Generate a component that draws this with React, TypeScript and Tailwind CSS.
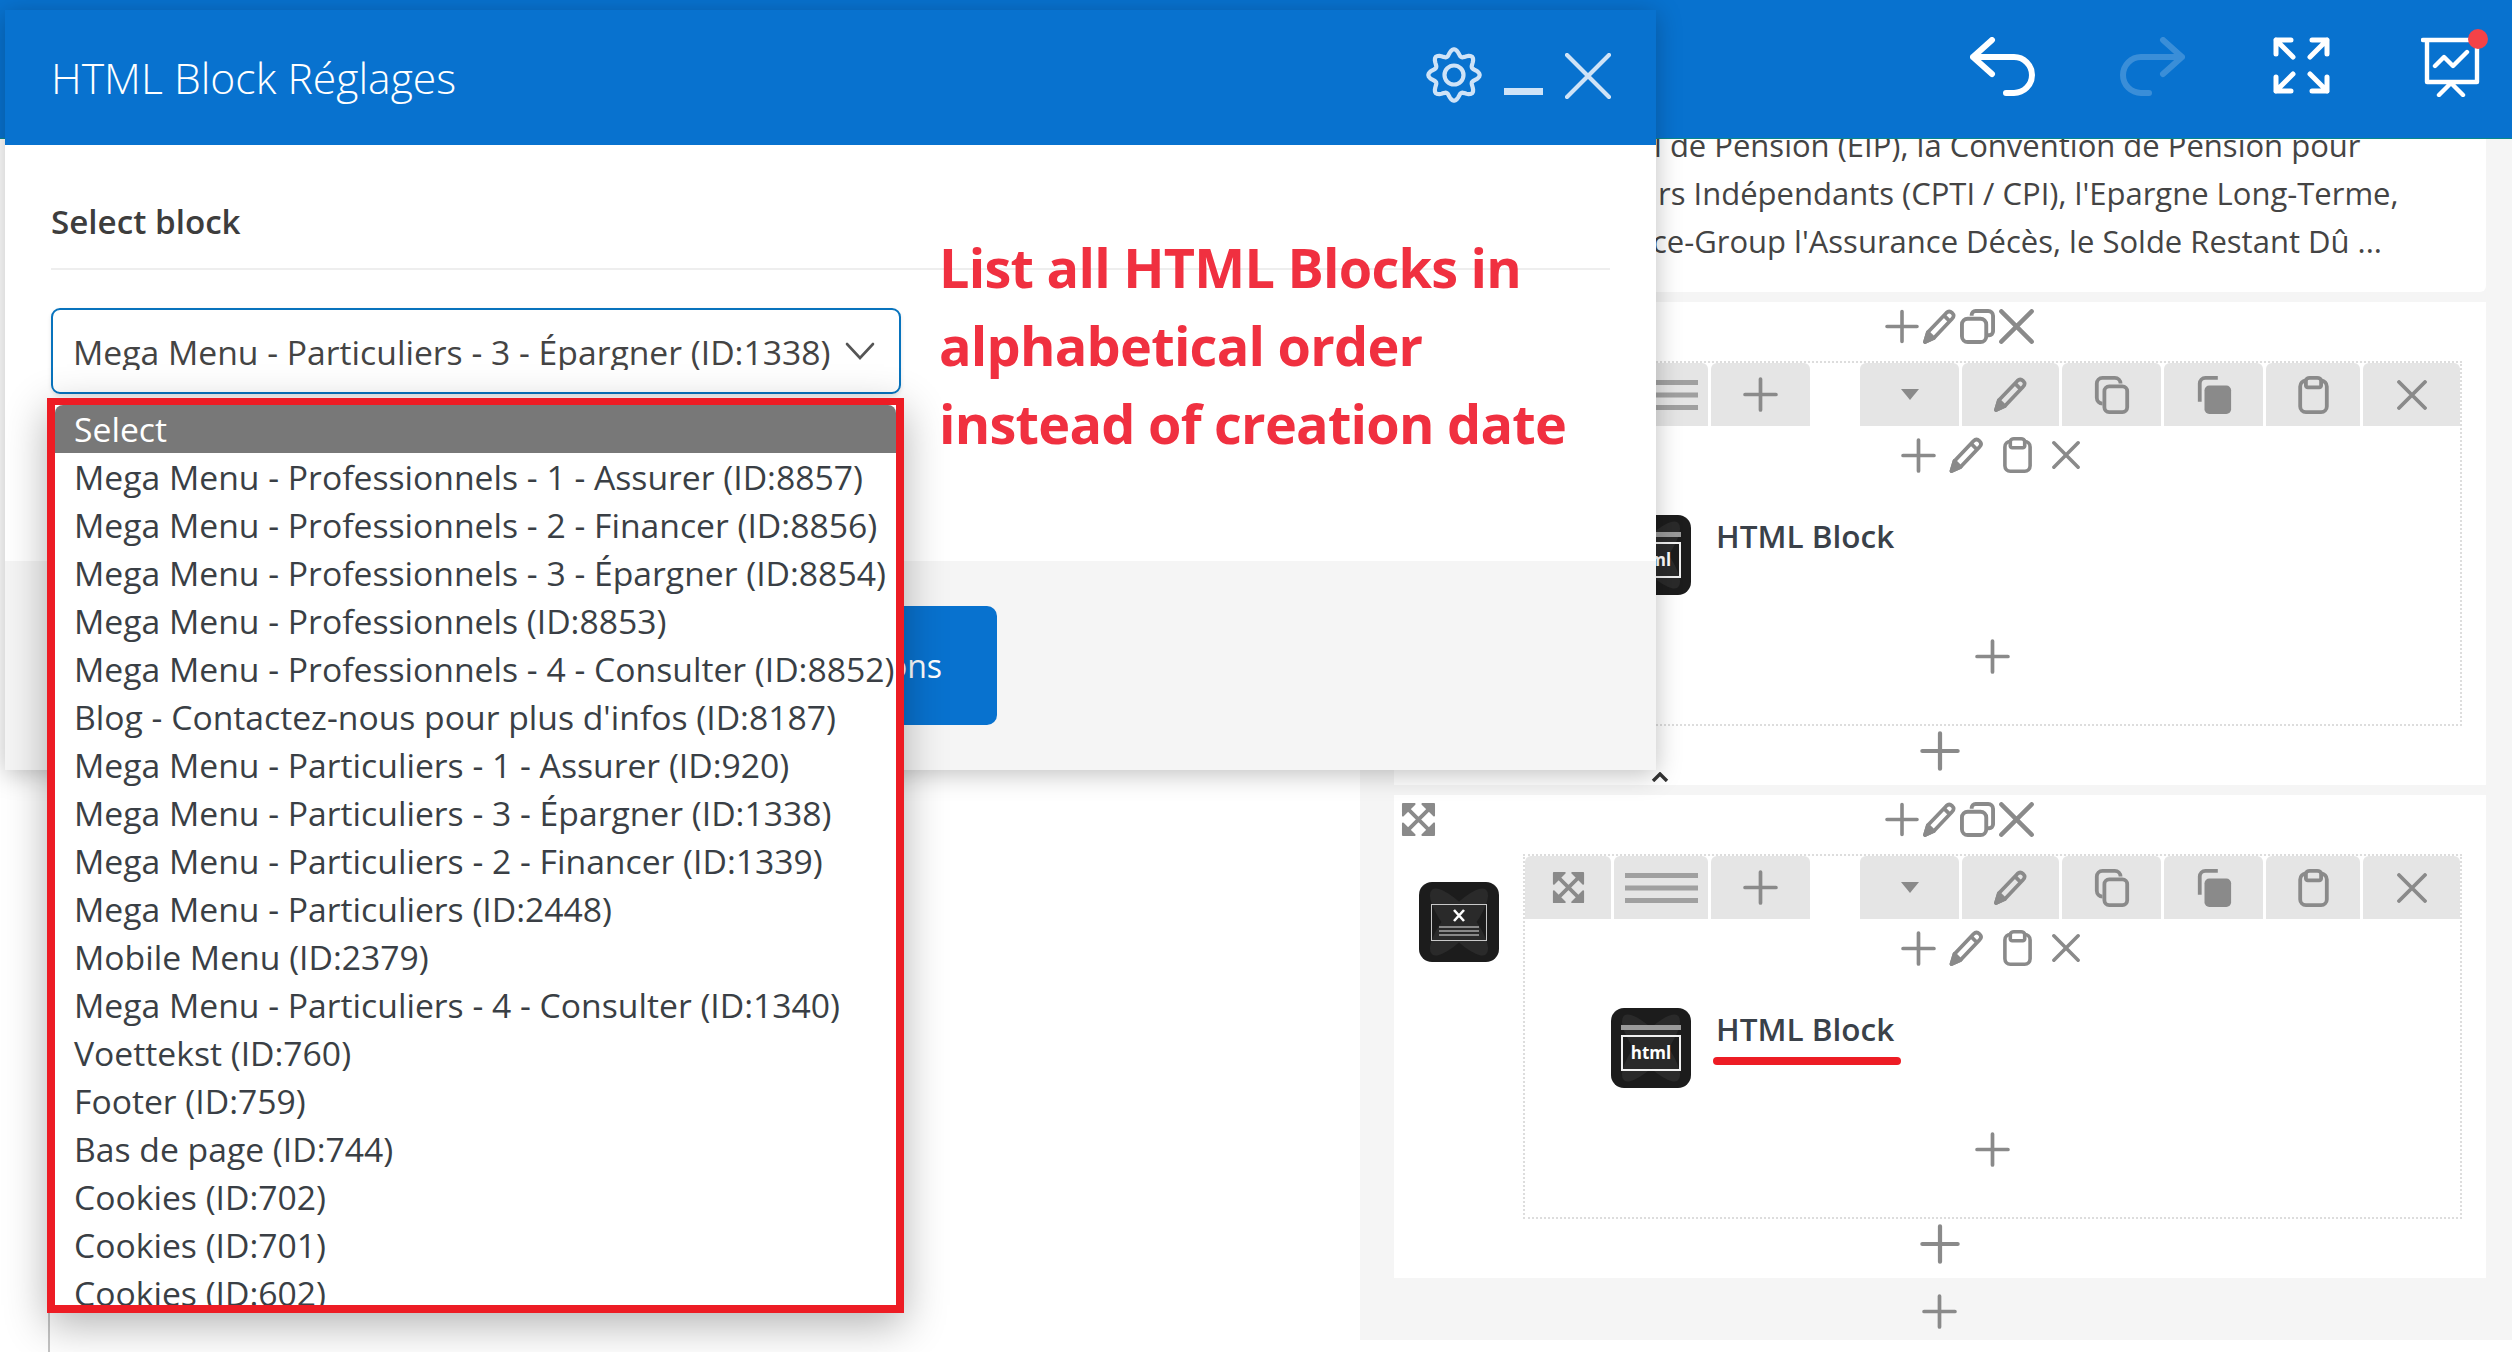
import React from 'react';

type IconProps = { className?: string };

const blocks = [
  'Mega Menu - Professionnels - 1 - Assurer (ID:8857)',
  'Mega Menu - Professionnels - 2 - Financer (ID:8856)',
  'Mega Menu - Professionnels - 3 - Épargner (ID:8854)',
  'Mega Menu - Professionnels (ID:8853)',
  'Mega Menu - Professionnels - 4 - Consulter (ID:8852)',
  "Blog - Contactez-nous pour plus d'infos (ID:8187)",
  'Mega Menu - Particuliers - 1 - Assurer (ID:920)',
  'Mega Menu - Particuliers - 3 - Épargner (ID:1338)',
  'Mega Menu - Particuliers - 2 - Financer (ID:1339)',
  'Mega Menu - Particuliers (ID:2448)',
  'Mobile Menu (ID:2379)',
  'Mega Menu - Particuliers - 4 - Consulter (ID:1340)',
  'Voettekst (ID:760)',
  'Footer (ID:759)',
  'Bas de page (ID:744)',
  'Cookies (ID:702)',
  'Cookies (ID:701)',
  'Cookies (ID:602)',
];

// scalloped outline of the settings cog, 8 lobes
const gearPath = (() => {
  const pts: string[] = [];
  for (let i = 0; i <= 96; i++) {
    const a = (i / 96) * Math.PI * 2 - Math.PI / 2;
    const r = 22.5 + 3.2 * Math.cos(8 * (a + Math.PI / 2));
    pts.push(`${(28 + r * Math.cos(a)).toFixed(2)} ${(28 + r * Math.sin(a)).toFixed(2)}`);
  }
  return `M${pts.join('L')}Z`;
})();

function Plus({ className }: IconProps) {
  return (
    <svg viewBox="0 0 34 34" className={className} fill="none" stroke="#8a8a8a" strokeWidth="3.6" strokeLinecap="round">
      <path d="M17 2v30M2 17h30" />
    </svg>
  );
}

function Pencil({ className }: IconProps) {
  return (
    <svg viewBox="0 0 34 36" className={className} fill="none" stroke="#8a8a8a" strokeWidth="3.8" strokeLinejoin="round">
      <path d="M2 34l3-10L24 4c2-2 4-2 6 0s2 4 0 6L11 30z" />
      <path d="M2 34l3-10 6 6z" fill="#8a8a8a" />
      <path d="M22 7l6 6" />
    </svg>
  );
}

function Duplicate({ className }: IconProps) {
  return (
    <svg viewBox="0 0 36 36" className={className} fill="none" stroke="#8a8a8a" strokeWidth="4">
      <path d="M12 7V6a4 4 0 0 1 4-4h13a5 5 0 0 1 5 5v16a4 4 0 0 1-4 4h-3" />
      <rect x="2" y="10" width="25" height="24" rx="6" />
    </svg>
  );
}

function CopyOutline({ className }: IconProps) {
  return (
    <svg viewBox="0 0 36 40" className={className} fill="none" stroke="#8a8a8a" strokeWidth="4">
      <path d="M8 29a6 6 0 0 1-6-6V8a6 6 0 0 1 6-6h13a6 6 0 0 1 6 6" />
      <rect x="10" y="11" width="24" height="27" rx="5" />
    </svg>
  );
}

function CopyFilled({ className }: IconProps) {
  return (
    <svg viewBox="0 0 36 40" className={className} fill="none" stroke="#8a8a8a" strokeWidth="4">
      <path d="M3 27V8a6 6 0 0 1 6-6h13" />
      <rect x="8" y="10" width="28" height="30" rx="5" fill="#8a8a8a" stroke="none" />
    </svg>
  );
}

function Clipboard({ className, notch = '#fff' }: IconProps & { notch?: string }) {
  return (
    <svg viewBox="0 0 32 40" className={className} fill="none" stroke="#8a8a8a" strokeWidth="4">
      <rect x="2" y="5" width="28" height="33" rx="6" />
      <path d="M8 5c0-2 2-3 4-3h8c2 0 4 1 4 3v5c0 1-1 2-2 2H10c-1 0-2-1-2-2z" fill={notch} />
    </svg>
  );
}

function Cross({ className }: IconProps) {
  return (
    <svg viewBox="0 0 30 30" className={className} fill="none" stroke="#8a8a8a" strokeWidth="3.8" strokeLinecap="round">
      <path d="M2 2l26 26M28 2L2 28" />
    </svg>
  );
}

function Move({ className }: IconProps) {
  return (
    <svg viewBox="0 0 36 36" className={className} fill="none" stroke="#8a8a8a" strokeWidth="4" strokeLinejoin="round">
      <path d="M5 5l26 26M31 5L5 31" />
      <path d="M2 2h12l-12 12zM34 2v12L22 2zM2 34V22l12 12zM34 34H22l12-12z" fill="#8a8a8a" strokeWidth="2" />
    </svg>
  );
}

function Lines({ className }: IconProps) {
  return (
    <svg viewBox="0 0 73 30" className={className} fill="#a0a0a0">
      <rect x="0" y="0" width="73" height="5" />
      <rect x="0" y="12.5" width="73" height="5" />
      <rect x="0" y="25" width="73" height="5" />
    </svg>
  );
}

function Caret({ className }: IconProps) {
  return (
    <svg viewBox="0 0 18 11" className={className} fill="#8a8a8a">
      <path d="M0 0h18L9 11z" />
    </svg>
  );
}

function WidgetIcon({ kind, className }: { kind: 'section' | 'html'; className?: string }) {
  return (
    <svg viewBox="0 0 80 80" className={className}>
      <rect width="80" height="80" rx="13" fill="#1c1c1c" />
      <ellipse cx="40" cy="40" rx="14" ry="42" transform="rotate(40 40 40)" fill="#2a2a2a" />
      <ellipse cx="40" cy="40" rx="14" ry="42" transform="rotate(-40 40 40)" fill="#2a2a2a" />
      {kind === 'section' ? (
        <g>
          <rect x="12.5" y="22.5" width="55" height="36" fill="none" stroke="#c8c8c8" strokeWidth="1" />
          <path d="M35 28l10 11M45 28L35 39" stroke="#fff" strokeWidth="2.6" />
          <path d="M20 45h40M20 49h40M20 53h40" stroke="#a8a8a8" strokeWidth="1.4" />
        </g>
      ) : (
        <g>
          <rect x="10" y="17" width="60" height="5" fill="#9a9a9a" />
          <rect x="11" y="28" width="58" height="34" fill="none" stroke="#f0f0f0" strokeWidth="2" />
          <text x="40" y="51" textAnchor="middle" fontSize="17" fontWeight="700" fill="#fff" fontFamily="'Open Sans', sans-serif">
            html
          </text>
        </g>
      )}
    </svg>
  );
}

function ToolButton({ width, children }: { width: string; children: React.ReactNode }) {
  return <div className={`${width} h-full bg-[#e5e5e5] rounded-t-[6px] flex items-center justify-center`}>{children}</div>;
}

function BlockCard({ underlined, children }: { underlined?: boolean; children?: React.ReactNode }) {
  return (
    <div className="relative bg-white h-[483px] flex flex-col">
      <div className="h-[59px] flex items-start pt-[7px] pl-[7px]">
        <Move className="w-[35px] h-[35px]" />
        <Plus className="w-[34px] h-[35px] ml-[449px]" />
        <Pencil className="w-[33px] h-[35px] ml-[4px]" />
        <Duplicate className="w-[35px] h-[35px] ml-[4px]" />
        <Cross className="w-[35px] h-[35px] ml-[4px]" />
      </div>
      <div className="flex items-start">
        <div className="w-[129px] pl-[25px] pt-[28px]">
          <WidgetIcon kind="section" className="w-[80px] h-[80px]" />
        </div>
        <div className="w-[939px]">
          <div className="h-[365px] border-2 border-dotted border-[#dddddd] flex flex-col">
            <div className="h-[63px] flex">
              <div className="flex gap-[3px] w-[336px]">
                <ToolButton width="w-[86px]"><Move className="w-[33px] h-[33px]" /></ToolButton>
                <ToolButton width="w-[94px]"><Lines className="w-[73px] h-[30px]" /></ToolButton>
                <ToolButton width="w-[99px]"><Plus className="w-[35px] h-[35px]" /></ToolButton>
              </div>
              <div className="flex gap-[3px]">
                <ToolButton width="w-[99px]"><Caret className="w-[18px] h-[11px]" /></ToolButton>
                <ToolButton width="w-[97px]"><Pencil className="w-[33px] h-[35px]" /></ToolButton>
                <ToolButton width="w-[99px]"><CopyOutline className="w-[36px] h-[38px]" /></ToolButton>
                <ToolButton width="w-[99px]"><CopyFilled className="w-[36px] h-[38px]" /></ToolButton>
                <ToolButton width="w-[94px]"><Clipboard notch="#e5e5e5" className="w-[31px] h-[38px]" /></ToolButton>
                <ToolButton width="w-[97px]"><Cross className="w-[30px] h-[30px]" /></ToolButton>
              </div>
            </div>
            <div className="flex items-center mt-[12px] ml-[376px] h-[34px]">
              <Plus className="w-[35px] h-[35px]" />
              <Pencil className="w-[35px] h-[36px] ml-[13px]" />
              <Clipboard className="w-[31px] h-[36px] ml-[18px]" />
              <Cross className="w-[28px] h-[28px] ml-[19px]" />
            </div>
            <div className="flex items-start ml-[86px] mt-[43px]">
              <WidgetIcon kind="html" className="w-[80px] h-[80px]" />
              <div className="ml-[25px] -mt-[1px] text-[31.5px] leading-[44px] text-[#3a4149] font-semibold">
                HTML Block
                {underlined && <div className="-ml-[3px] mt-[6px] w-[188px] h-[8px] rounded-full bg-[#ed1c24]" />}
              </div>
            </div>
            <Plus className="w-[35px] h-[35px] ml-[450px] mt-[44px]" />
          </div>
          <Plus className="w-[40px] h-[40px] ml-[397px] mt-[5px]" />
        </div>
      </div>
      {children}
    </div>
  );
}

function SelectDropdown() {
  return (
    <div className="absolute left-[42px] top-[388px] w-[857px] h-[915px] border-[8px] border-t-[7px] border-[#ed1c24] bg-white shadow-[0_12px_40px_rgba(0,0,0,0.3)]">
      <div className="h-full overflow-hidden rounded-[8px] text-[33.7px] leading-[48px] text-[#3a3f45]">
        <div className="h-[48px] pl-[19px] bg-[#787878] text-white">Select</div>
        {blocks.map(b => (
          <div key={b} className="h-[48px] pl-[19px] whitespace-nowrap">{b}</div>
        ))}
      </div>
    </div>
  );
}

function SettingsModal() {
  return (
    <div className="absolute left-[5px] top-[10px] w-[1651px] h-[760px] flex flex-col bg-white shadow-[0_4px_24px_rgba(0,0,0,0.25)]">
      <div className="h-[135px] shrink-0 bg-[#0872cf] flex items-start pl-[46px]">
        <div className="mt-[43px] text-[42.7px] leading-[50px] font-light text-white">HTML Block Réglages</div>
        <div className="ml-auto flex items-start text-[#cfe3f7]">
          <svg viewBox="0 0 56 56" className="w-[56px] h-[56px] mt-[37px]" fill="none" stroke="currentColor" strokeWidth="4.2" strokeLinejoin="round">
            <path d={gearPath} />
            <circle cx="28" cy="28" r="9.5" />
          </svg>
          <div className="w-[39px] h-[7px] bg-current mt-[78px] ml-[22px]" />
          <svg viewBox="0 0 46 46" className="w-[46px] h-[46px] mt-[43px] ml-[22px] mr-[45px]" fill="none" stroke="currentColor" strokeWidth="4.2" strokeLinecap="round">
            <path d="M2 2l42 42M44 2L2 44" />
          </svg>
        </div>
      </div>
      <div className="h-[416px] shrink-0 px-[46px] pt-[55px]">
        <div className="pb-[24px] border-b-2 border-[#eeeeee] text-[33.2px] leading-[44px] font-semibold text-[#3d3d3d]">Select block</div>
        <div className="mt-[38px] w-[850px] h-[86px] border-2 border-[#0873bd] rounded-[9px] flex items-start pl-[20px] pr-[24px] shadow-[0_2px_4px_rgba(0,0,0,0.1)]">
          <div className="mt-[19px] h-[41px] overflow-hidden text-[33.7px] leading-[46px] text-[#444444] whitespace-nowrap">
            Mega Menu - Particuliers - 3 - Épargner (ID:1338)
          </div>
          <svg viewBox="0 0 30 18" className="ml-auto mt-[32px] w-[30px] h-[18px]" fill="none" stroke="#555555" strokeWidth="2.6" strokeLinecap="round">
            <path d="M2 2l13 14L28 2" />
          </svg>
        </div>
      </div>
      <div className="flex-1 bg-[#f5f5f5] pt-[45px] pl-[560px]">
        <div className="w-[432px] h-[119px] rounded-[10px] bg-[#0872cf] text-white text-[32px] leading-[119px] text-right pr-[55px]">Options</div>
      </div>
      <div className="absolute left-[934px] top-[218px] text-[54px] tracking-[-0.75px] leading-[78px] font-bold text-[#f03040] whitespace-nowrap">
        <div>List all HTML Blocks in</div>
        <div>alphabetical order</div>
        <div>instead of creation date</div>
      </div>
      <SelectDropdown />
    </div>
  );
}

export default function App() {
  return (
    <div className="relative w-[2512px] h-[1352px] overflow-hidden bg-white flex flex-col font-['Open_Sans',sans-serif]">
      <div className="h-[139px] shrink-0 bg-[#0872cf] border-b border-[#0a8a8a] flex items-start justify-end pt-[37px] pr-[31px]">
        <svg viewBox="0 0 67 59" className="w-[67px] h-[59px]" fill="none" stroke="#fff" strokeWidth="6" strokeLinecap="round" strokeLinejoin="round">
          <path d="M22 3L3 20l19 17M3 20h41a18 18 0 0 1 0 36h-8" />
        </svg>
        <svg viewBox="0 0 67 59" className="w-[67px] h-[59px] ml-[81px] opacity-20" fill="none" stroke="#fff" strokeWidth="6" strokeLinecap="round" strokeLinejoin="round">
          <path d="M45 3l19 17-19 17M64 20H23a18 18 0 0 0 0 36h8" />
        </svg>
        <svg viewBox="0 0 57 57" className="w-[57px] h-[57px] ml-[88px]" fill="none" stroke="#fff" strokeWidth="5" strokeLinecap="round" strokeLinejoin="round">
          <path d="M3 17V3h15M3 3l17 17M54 17V3H39M54 3L37 20M3 40v14h15M3 54l17-17M54 40v14H39M54 54L37 37" />
        </svg>
        <div className="relative w-[60px] h-[60px] ml-[91px]">
          <svg viewBox="0 0 60 60" className="w-[60px] h-[60px]" fill="none" stroke="#fff" strokeWidth="4.4" strokeLinecap="round" strokeLinejoin="round">
            <path d="M2 3h56M6 3v42h50V3M14 29l9-9 9 9 14-14M18 58l12-12 12 12" />
          </svg>
          <div className="absolute left-[47px] -top-[8px] w-[20px] h-[20px] rounded-full bg-[#f44248]" />
        </div>
      </div>
      <div className="flex-1 flex">
        <div className="w-[1360px] shrink-0">
          <div className="ml-[48px] h-full border-l-2 border-[#c4c4c4]" />
        </div>
        <div className="flex-1">
          <div className="h-[1201px] bg-[#f5f5f5] pl-[34px] pr-[26px] flex flex-col gap-[10px]">
            <div className="h-[153px] shrink-0 bg-white rounded-b-[6px] text-[31px] leading-[48px] text-[#444444] whitespace-nowrap overflow-hidden">
              <div className="-mt-[18px] ml-[260px]">l de Pension (EIP), la Convention de Pension pour</div>
              <div className="ml-[245px]">urs Indépendants (CPTI / CPI), l'Epargne Long-Terme,</div>
              <div className="ml-[258px]">ce-Group l'Assurance Décès, le Solde Restant Dû ...</div>
            </div>
            <BlockCard>
              <svg viewBox="0 0 18 10" className="absolute left-[257px] top-[470px] w-[18px] h-[10px]" fill="none" stroke="#333333" strokeWidth="3.4">
                <path d="M2 9l7-7 7 7" />
              </svg>
            </BlockCard>
            <BlockCard underlined />
            <Plus className="w-[35px] h-[35px] ml-[528px] mt-[6px]" />
          </div>
        </div>
      </div>
      <SettingsModal />
    </div>
  );
}
